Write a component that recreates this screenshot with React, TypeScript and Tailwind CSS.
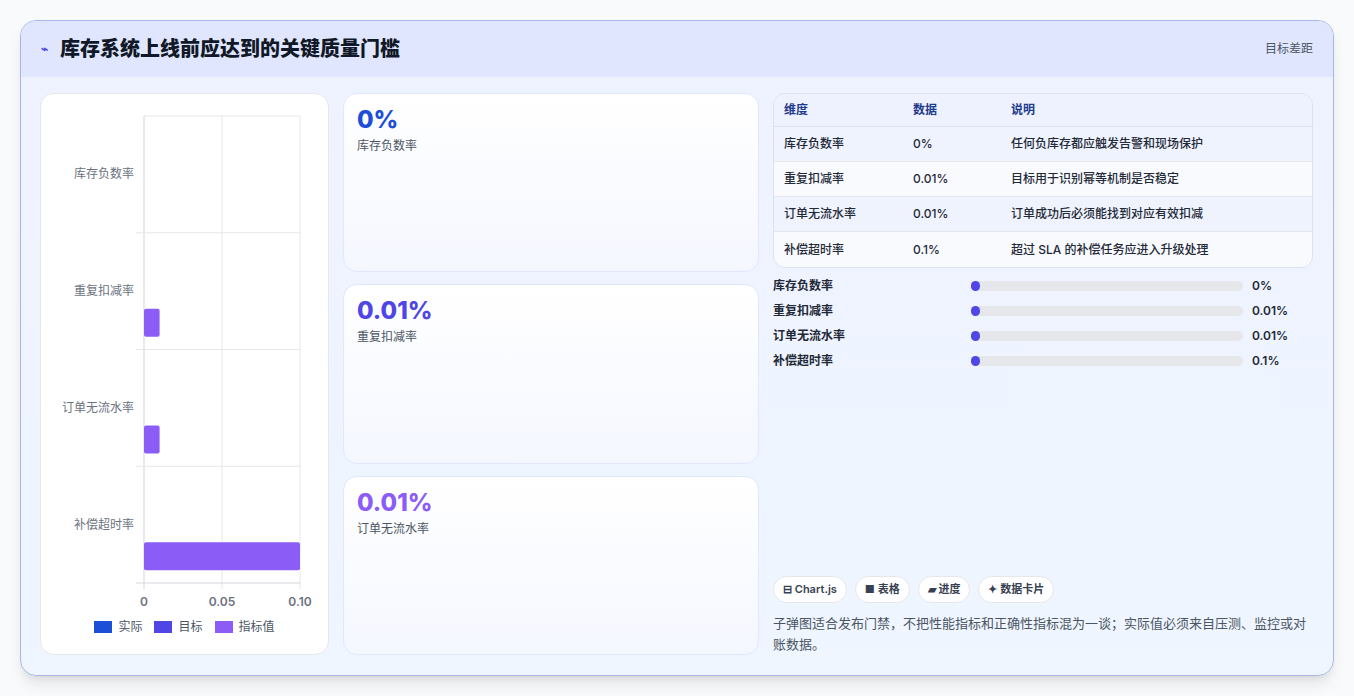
import React from "react";

const rows = [
  ["库存负数率", "0%", "任何负库存都应触发告警和现场保护"],
  ["重复扣减率", "0.01%", "目标用于识别幂等机制是否稳定"],
  ["订单无流水率", "0.01%", "订单成功后必须能找到对应有效扣减"],
  ["补偿超时率", "0.1%", "超过 SLA 的补偿任务应进入升级处理"],
];

function Chart() {
  const cats = ["库存负数率", "重复扣减率", "订单无流水率", "补偿超时率"];
  const vals = [0, 0.01, 0.01, 0.1];
  const x0 = 103, w = 156, y0 = 22, bh = 116.75;
  return (
    <svg width="288" height="520" className="block">
      <line x1={x0} y1={y0} x2={x0 + w} y2={y0} stroke="#e5e7eb" />
      {[0, 0.5, 1].map((f, i) => (
        <line key={i} x1={x0 + f * w} y1={y0} x2={x0 + f * w} y2={y0 + 4 * bh + 6} stroke={i === 0 ? "#d1d5db" : "#e5e7eb"} />
      ))}
      {cats.map((c, i) => (
        <g key={c}>
          <line x1={x0 - 8} y1={y0 + (i + 1) * bh} x2={x0 + w} y2={y0 + (i + 1) * bh} stroke={i === 3 ? "#d1d5db" : "#e5e7eb"} />
          <text x={x0 - 10} y={y0 + i * bh + bh / 2 + 4} textAnchor="end" fontSize="12" fill="#6b7280">{c}</text>
          {vals[i] > 0 && (
            <rect x={x0} y={y0 + i * bh + 76} width={Math.max(15, (vals[i] / 0.1) * w)} height={28} rx={2} fill="#8b5cf6" />
          )}
        </g>
      ))}
      {["0", "0.05", "0.10"].map((t, i) => (
        <text key={t} x={x0 + i * 0.5 * w} y={y0 + 4 * bh + 23} textAnchor="middle" fontSize="12" fontWeight="600" fill="#6b7280">{t}</text>
      ))}
    </svg>
  );
}

export default function App() {
  return (
    <div className="w-[1354px] h-[696px] bg-[#f9fafb] p-5" style={{ fontFamily: "Inter, 'Noto Sans CJK SC', sans-serif" }}>
      <div className="h-[656px] rounded-[16px] border border-[#aab6e6] bg-gradient-to-b from-[#eef2ff] to-[#eff6ff] overflow-hidden shadow-lg flex flex-col">
        <div className="h-[56px] bg-[#dfe6fd] flex items-center justify-between px-5">
          <div className="flex items-center gap-3">
            <span className="text-[#4f46e5] text-[12px] font-bold">⌁</span>
            <span className="text-[20px] font-extrabold text-[#111827]">库存系统上线前应达到的关键质量门槛</span>
          </div>
          <span className="text-[12px] text-[#4b5563]">目标差距</span>
        </div>
        <div className="flex-1 flex gap-[14px] pl-[19px] pr-5 pb-5 pt-[16px]">
          <div className="w-[289px] bg-white rounded-[14px] border border-[#e5e7eb] flex flex-col">
            <Chart />
            <div className="flex justify-center gap-3 text-[12px] text-[#4b5563] mt-[4px]">
              <span className="flex items-center gap-1.5"><span className="w-[18px] h-[12px] bg-[#1d4ed8]" />实际</span>
              <span className="flex items-center gap-1.5"><span className="w-[18px] h-[12px] bg-[#4f46e5]" />目标</span>
              <span className="flex items-center gap-1.5"><span className="w-[18px] h-[12px] bg-[#8b5cf6]" />指标值</span>
            </div>
          </div>
          <div className="w-[416px] flex flex-col gap-3">
            {[["0%", "库存负数率", "text-[#1d4ed8]"], ["0.01%", "重复扣减率", "text-[#4f46e5]"], ["0.01%", "订单无流水率", "text-[#8b5cf6]"]].map(([v, l, c]) => (
              <div key={l} className="flex-1 rounded-[14px] border border-[#e0e7ff] bg-gradient-to-b from-white to-[#f5f7ff] px-[13px] pt-[10px]">
                <div className={`text-[24px] font-extrabold leading-[32px] ${c}`}>{v}</div>
                <div className="text-[12px] text-[#4b5563] mt-[1px]">{l}</div>
              </div>
            ))}
          </div>
          <div className="flex-1 flex flex-col">
            <div className="rounded-[12px] border border-[#dbe2ef] overflow-hidden text-[12px]">
              <div className="flex h-[33px] items-center bg-[#eef2ff] border-b border-[#dbe2ef] font-semibold text-[#1e3a8a]">
                <span className="w-[139px] pl-[10px]">维度</span><span className="w-[98px]">数据</span><span>说明</span>
              </div>
              {rows.map((r, i) => (
                <div key={r[0]} className={`flex h-[35px] items-center text-[#1f2937] font-medium ${i % 2 ? "bg-[#f8fafe]" : "bg-[#eef3fe]"} ${i < 3 ? "border-b border-[#e5e7eb]" : ""}`}>
                  <span className="w-[139px] pl-[10px]">{r[0]}</span><span className="w-[98px]">{r[1]}</span><span>{r[2]}</span>
                </div>
              ))}
            </div>
            <div className="flex flex-col gap-[8px] mt-[9px] text-[12px] font-semibold text-[#1f2937]">
              {rows.map((r) => (
                <div key={r[0]} className="flex items-center h-[17px]">
                  <span className="w-[198px]">{r[0]}</span>
                  <div className="w-[272px] h-[10px] rounded-full bg-[#e5e7eb] relative">
                    <span className="absolute left-0 top-0 w-[9px] h-[10px] rounded-full bg-[#4f46e5]" />
                  </div>
                  <span className="ml-[9px]">{r[1]}</span>
                </div>
              ))}
            </div>
            <div className="mt-auto flex gap-2 text-[11px] font-semibold text-[#374151]">
              {["⊟ Chart.js", "■ 表格", "▰ 进度", "✦ 数据卡片"].map((t) => (
                <span key={t} className="h-[27px] px-[9px] rounded-full bg-white border border-[#e5e7eb] flex items-center">{t}</span>
              ))}
            </div>
            <p className="mt-[10px] text-[13px] leading-[21px] text-[#4b5563]">子弹图适合发布门禁，不把性能指标和正确性指标混为一谈；实际值必须来自压测、监控或对账数据。</p>
          </div>
        </div>
      </div>
    </div>
  );
}
